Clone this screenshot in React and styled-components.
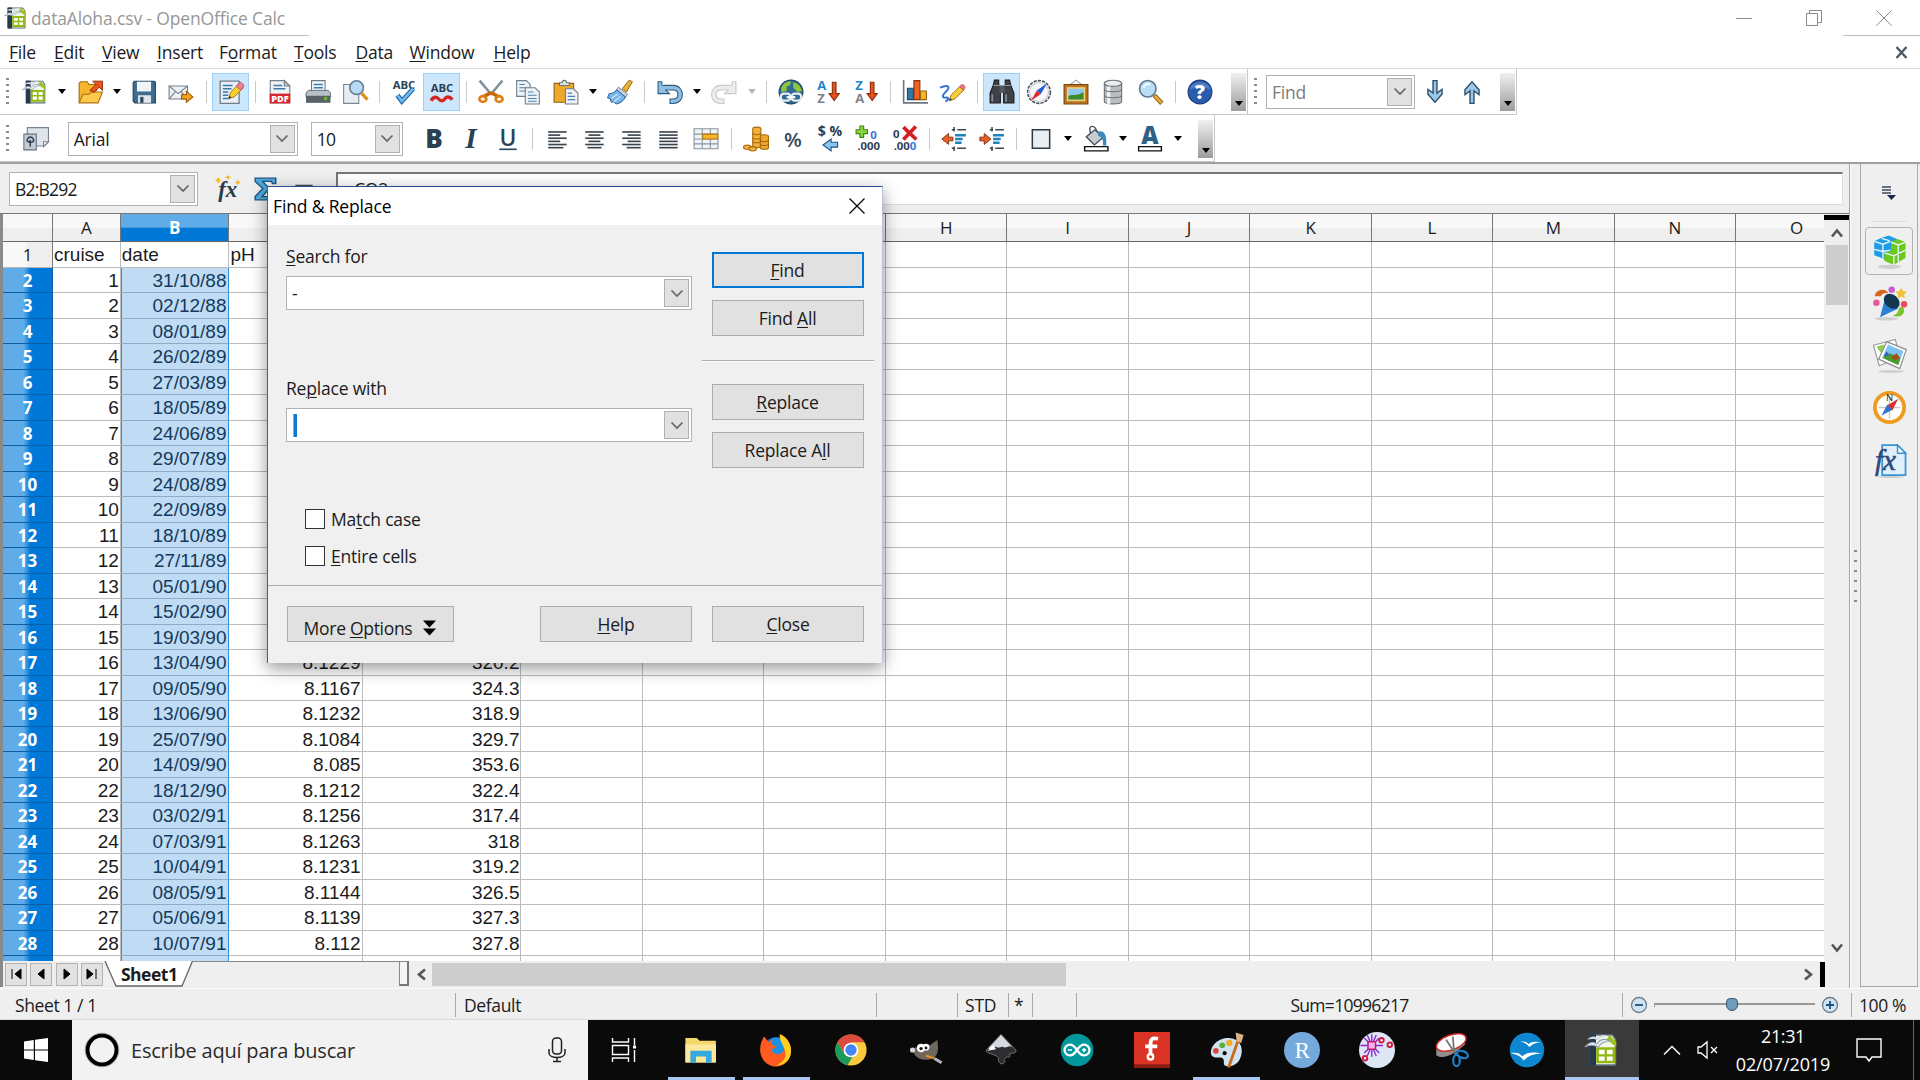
import React from 'react';
import styled, { createGlobalStyle, css } from 'styled-components';

const GlobalStyle = createGlobalStyle`
  * {
    box-sizing: border-box;
  }

  body {
    margin: 0;
    background: #fff;
    font-family: 'Open Sans', 'Noto Sans', sans-serif;
    font-size: 17.5px;
    letter-spacing: -0.2px;
    color: #1b1b1b;
  }

  svg {
    overflow: visible;
  }
`;

/* ---------- text ---------- */

const Label = styled.span`
  white-space: nowrap;
  line-height: 24px;
  font-size: ${p => p.$size || 17.5}px;
  letter-spacing: ${p => (p.$track === undefined ? -0.2 : p.$track)}px;
  color: ${p => p.$color || 'inherit'};

  u {
    text-decoration-thickness: 1px;
    text-underline-offset: 2px;
  }
`;

// "_" marks the letter that is the keyboard mnemonic
const Mnemonic = ({ text, ...rest }) => {
  const at = text.indexOf('_');
  if (at < 0) return <Label {...rest}>{text}</Label>;
  return (
    <Label {...rest}>
      {text.slice(0, at)}
      <u>{text[at + 1]}</u>
      {text.slice(at + 2)}
    </Label>
  );
};

/* ---------- icons ---------- */

const Svg = ({ size = 26, children, box = 24 }) => (
  <svg width={size} height={size} viewBox={`0 0 ${box} ${box}`} fill="none">
    {children}
  </svg>
);

const AbcText = ({ y }) => (
  <text x="12" y={y} textAnchor="middle" fontFamily="Open Sans" fontWeight="700" fontSize="10.5" letterSpacing="0" fill="#2b3f52">
    ABC
  </text>
);

const DownArrowRed = () => (
  <path d="M16 3h3.400v10.500h3l-4.700 6.500-4.700-6.500h3z" fill="#e8501c" stroke="#8a2c0c" />
);

const SortText = ({ top, bottom }) => (
  <g fontFamily="Open Sans" fontWeight="700" fontSize="12" letterSpacing="0">
    <text x="2" y="10" fill="#1d86cc">{top}</text>
    <text x="2" y="22.500" fill="#7d8388">{bottom}</text>
  </g>
);

const AlignLines = ({ rows }) => (
  <g stroke="#39434c" strokeWidth="1.500">
    {rows.map(([a, b], i) => (
      <path key={i} d={`M${a} ${5.500 + i * 2.900}H${b}`} />
    ))}
  </g>
);

const CalcGlyph = () => (
  <>
    <path d="M4 2h15l2 3v17H4z" fill="#f3f7e6" stroke="#5d7180" />
    <path d="M3.500 1.500h4.500v21H3.500z" fill="#26394e" />
    <path d="M17 2l4.500 4.500V10L15 5z" fill="#9cc31a" />
    <path d="M9 11h11v9H9z" fill="#fff" stroke="#93b812" strokeWidth="1.800" />
    <path d="M14.500 11v9M9 15.500h11" stroke="#93b812" strokeWidth="1.500" />
    <path d="M.5 10c3-3.500 6-4 8-2 2-3 5-4 9-2-4 0-6 1-8 4-3-1.500-6-1.500-9 0z" fill="#e9edf1" stroke="#8e9dab" strokeWidth=".7" />
    <path d="M2 5c3-2.500 5-2.500 7-1 2-2 4-2.500 6.500-1.500-3 .5-4.500 1.200-6 3C7 4.500 5 4.300 2 5z" fill="#d5dce2" />
  </>
);

const Indents = ({ arrow }) => (
  <>
    <path d="M10 3.500h3M15 3.500h8M10 20.500h3M15 20.500h8M12 1v4M12 19v4" stroke="#3c4750" strokeWidth="1.400" />
    <path d="M13 8.500h10M13 12h7M13 15.500h6" stroke="#1e82bd" strokeWidth="2.300" />
    <path d={arrow} fill="#e5602a" stroke="#8c300e" strokeWidth=".9" />
  </>
);

const icons = {
  calc: <CalcGlyph />,
  open: (
    <>
      <path d="M2 22V4l1.500-1.500h6L11 5h7v6" fill="#f5b52c" stroke="#a8680c" />
      <path d="M2 22L5.500 14h6l1.500-2h10.500L19.500 22z" fill="#fdc94a" stroke="#b26f0c" />
      <path d="M12 10.500l5.500-5.500-3-3h9v8.500l-3-3-5 5z" fill="#ea5320" stroke="#8f2c0b" strokeWidth=".9" />
    </>
  ),
  save: (
    <>
      <path d="M2 3.500L3 2h18.500L22.500 3v19H3.500L2 20.500z" fill="#3f6d92" stroke="#233f5a" />
      <path d="M5.500 2.500h13v9h-13z" fill="#f1f4f6" />
      <path d="M6.500 15h12v7h-12z" fill="#dfe5ea" />
      <path d="M8.500 16.500h3V22h-3z" fill="#2c4a66" />
    </>
  ),
  mail: (
    <>
      <path d="M1 6.500h17v12H1z" fill="#eef1f4" stroke="#75818c" />
      <path d="M1 6.500l8.500 7L18 6.500M1 18.500l6-7M18 18.500l-6-7" stroke="#75818c" />
      <path d="M12.500 14.500H17V11.500l6 5-6 5V18.500h-4.500z" fill="#f6a31b" stroke="#9a5a06" />
    </>
  ),
  edit: (
    <>
      <path d="M2 2h17.500v20.500H2z" fill="#e9eff4" stroke="#6d7c89" strokeWidth="1.200" />
      <path d="M4.500 6h9M4.500 9h8M4.500 12h5M4.500 15h5M4.500 18h6" stroke="#3b79a8" strokeWidth="1.300" />
      <path d="M10 18l1.500-5.500L19 4.500l4 4-8 8z" fill="#f9cf2f" stroke="#9a6a08" strokeWidth=".8" />
      <path d="M17 6.500l2.500-3c1.500-1.500 5.500 2 4 4l-2.500 3z" fill="#ef7f93" stroke="#b34a5b" strokeWidth=".8" />
      <path d="M10 18l.6-2.500 1.800 1.800z" fill="#222" />
    </>
  ),
  pdf: (
    <>
      <path d="M3 1.500h13l5 5V22H3z" fill="#eef2f5" stroke="#74828e" />
      <path d="M16 1.500v5h5z" fill="#c2cbd3" stroke="#74828e" />
      <path d="M6 6h8M6 9h11" stroke="#3b79a8" strokeWidth="1.300" />
      <path d="M2.500 13.500h19v9h-19z" fill="#d9232e" />
      <text x="12" y="21" textAnchor="middle" fontFamily="Open Sans" fontWeight="800" fontSize="8.500" letterSpacing="0" fill="#fff">PDF</text>
    </>
  ),
  print: (
    <>
      <path d="M6 12V1.500h12.500V12" fill="#f4f7f9" stroke="#6c7985" />
      <path d="M8 5h8.500M8 8h8.500" stroke="#3b79a8" strokeWidth="1.400" />
      <path d="M1 13l2-2.500h18.500l2 2.500v4H1z" fill="#b8bfc5" stroke="#555f68" strokeWidth=".8" />
      <path d="M1 15.500h22.500V22H1z" fill="#5a6268" />
      <path d="M17.500 16.500h3v3h-3z" fill="#64b827" />
    </>
  ),
  preview: (
    <>
      <path d="M1.500 5h14v17.500h-14z" fill="#e9edf1" stroke="#7c8893" />
      <circle cx="13.500" cy="8" r="6.300" fill="#b6daf2" stroke="#5e7c94" strokeWidth="1.400" />
      <path d="M18 13l5.500 6" stroke="#d8931c" strokeWidth="3" />
    </>
  ),
  spell: (
    <>
      <AbcText y="9" />
      <path d="M6 15l4 5.500L20.500 9" stroke="#1c5e9b" strokeWidth="4.400" />
      <path d="M6 15l4 5.500L20.500 9" stroke="#6cbcf2" strokeWidth="2.400" />
    </>
  ),
  autospell: (
    <>
      <AbcText y="12" />
      <path d="M2 20c2-4 5-4 7-1.500s4 2 5.500 0 4-3 7 .5" stroke="#d92424" strokeWidth="3.200" />
    </>
  ),
  cut: (
    <>
      <path d="M1.500 1.500l11 13M22.500 1.500l-11 13" stroke="#848e96" strokeWidth="2.300" />
      <path d="M12 12.500l-7 4M12 12.500l7 4" stroke="#c86508" strokeWidth="3.200" />
      <ellipse cx="4.500" cy="18.500" rx="3.200" ry="2.700" stroke="#e07d10" strokeWidth="2.400" />
      <ellipse cx="19.500" cy="18.500" rx="3.200" ry="2.700" stroke="#e07d10" strokeWidth="2.400" />
    </>
  ),
  copy: (
    <>
      <path d="M1.500 1.500h9l3.500 3.500v11h-12.500z" fill="#eef2f5" stroke="#6f7f8c" />
      <path d="M4 5h5M4 8h7M4 11h7" stroke="#4a84b0" />
      <path d="M9.500 8h9l4 4v11h-13z" fill="#eef2f5" stroke="#6f7f8c" />
      <path d="M12 12h5M12 15h8M12 18h8M12 20.500h8" stroke="#4a84b0" />
    </>
  ),
  paste: (
    <>
      <path d="M1 4h18v17.500H1z" fill="#eda92b" stroke="#92600e" />
      <path d="M6 6V3.500h2.500c0-3 4-3 4 0H15V6z" fill="#e4e7ea" stroke="#6d737a" />
      <path d="M11.500 9h7.500l4 4v10H11.500z" fill="#eef2f5" stroke="#6f7f8c" />
      <path d="M13.500 13h4M13.500 16h7M13.500 19h7" stroke="#4a84b0" />
    </>
  ),
  brush: (
    <>
      <path d="M14 9l6.500-8 3 1.500L18 12z" fill="#e6b034" stroke="#8b6110" strokeWidth=".8" />
      <path d="M10.500 7.500L19 14l-2 3-8.500-6.500z" fill="#c8d3dc" stroke="#5f7080" strokeWidth=".7" />
      <path d="M9 10l8 6.500c-1.500 3.500-4.500 6-8.500 6.500L6 21l-2 .5L3 18l-2.500-.5 1.500-4C5 13.500 7 12 9 10z" fill="#79b4ea" stroke="#235a9c" strokeWidth=".9" />
      <path d="M4 18l6-4M6.500 21l6-5" stroke="#d7ebfb" />
    </>
  ),
  undo: (
    <>
      <path d="M6 8h9c8.500 0 8.500 12.500 0 12.500h-3.500" stroke="#2b5a80" strokeWidth="5.200" />
      <path d="M1 2.500v11h10.500L7.500 9.500l1-2-4-2V2.500z" fill="#8fc0e4" stroke="#2b5a80" />
      <path d="M6 8h9c8.500 0 8.500 12.500 0 12.500h-2.500" stroke="#8fc0e4" strokeWidth="3.200" />
    </>
  ),
  redo: (
    <>
      <path d="M18 8H9c-8.500 0-8.500 12.500 0 12.500h3.500" stroke="#c9c9c9" strokeWidth="5.200" />
      <path d="M23 2.500v11H12.500l4-4-1-2 4-2V2.500z" fill="#ececec" stroke="#c9c9c9" />
      <path d="M18 8H9c-8.500 0-8.500 12.500 0 12.500h2.500" stroke="#ececec" strokeWidth="3.200" />
    </>
  ),
  link: (
    <>
      <circle cx="12" cy="12" r="11" fill="#2e6a94" stroke="#1e4461" />
      <path d="M3 8c2-5 6-6 9-6l-1 4-3 1v4l-5 1zM14 3c5 1 7 4 8 8l-4 1-4-4z" fill="#8dc63a" />
      <rect x="2.500" y="13.500" width="9" height="6.500" rx="3" stroke="#e8ecef" strokeWidth="2.200" />
      <rect x="12.500" y="13.500" width="9" height="6.500" rx="3" stroke="#e8ecef" strokeWidth="2.200" />
      <path d="M8 16.800h8" stroke="#fff" strokeWidth="2" />
    </>
  ),
  sortAsc: (
    <>
      <SortText top="A" bottom="Z" />
      <DownArrowRed />
    </>
  ),
  sortDesc: (
    <>
      <SortText top="Z" bottom="A" />
      <DownArrowRed />
    </>
  ),
  chart: (
    <>
      <path d="M1.500 1v21H24" stroke="#6a7681" strokeWidth="1.500" />
      <path d="M5 8.500h5.500V19H5z" fill="#3277a6" stroke="#1c4664" />
      <path d="M11 1.500h5.500V19H11z" fill="#ee6320" stroke="#8c300a" />
      <path d="M17 11h5.500v8H17z" fill="#f7b42c" stroke="#97650d" />
    </>
  ),
  draw: (
    <>
      <path d="M1 8c7-3 10-1 6 3s-5 7 0 6c2 0 2 2-1 4" stroke="#2f6fd0" strokeWidth="1.800" />
      <path d="M9.500 20l1.500-5 8-8 3.500 3.500-8 8z" fill="#f7cf3c" stroke="#8b690f" strokeWidth=".8" />
      <path d="M19 7l1.500-1.500c2-1 4.500 1.500 3 3.500l-1 1.500z" fill="#ee7a90" stroke="#aa4358" strokeWidth=".7" />
      <path d="M9.500 20l.7-2.500 1.700 1.700z" fill="#222" />
    </>
  ),
  find: (
    <>
      <path d="M5 1h4v4l1.500 5v12H1V13L4 5.500z" fill="#3e4246" stroke="#1c1e20" />
      <path d="M19 1h-4v4l-1.500 5v12H23V13l-3-7.500z" fill="#3e4246" stroke="#1c1e20" />
      <path d="M9.500 6h5v7h-5z" fill="#54595e" />
      <path d="M3 14v7M15.800 14v7" stroke="#8b9197" strokeWidth="1.500" />
      <path d="M4 6h6M14 6h6" stroke="#9ca2a7" strokeWidth=".8" />
    </>
  ),
  compass: (
    <>
      <circle cx="12" cy="12" r="10.500" fill="#f6f7f8" stroke="#4a5158" strokeWidth="1.400" strokeDasharray="3 1" />
      <circle cx="12" cy="12" r="8.800" stroke="#c6cbd0" />
      <path d="M19.500 4L13.500 14l-3.500-3.500z" fill="#1d5cd8" />
      <path d="M4.500 20L10 10.500l3.500 3.500z" fill="#e4282c" />
    </>
  ),
  gallery: (
    <>
      <path d="M7 5l5-4 5 4" stroke="#9aa2a8" />
      <path d="M1 5h22v18H1z" fill="#b8731c" stroke="#76450c" />
      <path d="M3.500 7.500h17v13h-17z" fill="#f3cf7a" />
      <path d="M5 9h14v10H5z" fill="#8cc9f2" />
      <path d="M5 16c3-3 6 1 14-4v7H5z" fill="#3e8b2a" />
    </>
  ),
  database: (
    <>
      <path d="M4 4v16.500c0 3.300 16 3.300 16 0V4z" fill="#b9bec3" stroke="#6c7378" />
      <path d="M8 6v17" stroke="#f0f2f4" strokeWidth="3" />
      <ellipse cx="12" cy="4" rx="8" ry="2.800" fill="#e9ebed" stroke="#6c7378" />
      <path d="M4 9.500c0 3 16 3 16 0M4 15c0 3 16 3 16 0" stroke="#6c7378" />
    </>
  ),
  zoom: (
    <>
      <circle cx="9" cy="9" r="7.600" fill="#b9def6" stroke="#60798e" strokeWidth="1.500" />
      <path d="M5 8c1-3 4-4 6-3" stroke="#fff" strokeWidth="1.800" />
      <path d="M15 15l7 7.500" stroke="#8e5f10" strokeWidth="4.200" />
      <path d="M15.500 15.500l6 6.500" stroke="#e8ae3b" strokeWidth="2.400" />
    </>
  ),
  help: (
    <>
      <circle cx="12" cy="12" r="11" fill="#2a5cad" stroke="#173c7c" />
      <path d="M2.500 10c1-9 18-9 19 0-6-3-13-3-19 0z" fill="#6b94d4" opacity=".6" />
      <text x="12" y="18.500" textAnchor="middle" fontFamily="Open Sans" fontWeight="800" fontSize="18" letterSpacing="0" fill="#fff">?</text>
    </>
  ),
  findDown: <path d="M10.200 1.500h3.600v11.500l4.700-3.500v4.500L12 21.500 5.500 14V9.500l4.700 3.500z" fill="#9cc8e8" stroke="#2b506e" strokeWidth="1.300" />,
  findUp: <path d="M10.200 22.500h3.600V11l4.700 3.500V10L12 2.500 5.500 10v4.500l4.700-3.500z" fill="#9cc8e8" stroke="#2b506e" strokeWidth="1.300" />,
  styles: (
    <>
      <path d="M4 1.500h19.500v13l-4 4H4z" fill="#dfe5ea" stroke="#76838f" />
      <path d="M23.500 14.500h-4.500v4.500z" fill="#fff" stroke="#76838f" />
      <path d="M.8 7.500h11.500v14.500H.8z" fill="#c3ccd5" stroke="#66737f" />
      <path d="M4 12c1.500-2.500 4-2.500 5.500 0s-1.500 3-2.800 3S3 14.500 4 12zM6.700 13v6" stroke="#2c3a47" strokeWidth="1.300" />
    </>
  ),
  bold: <text x="12" y="20" textAnchor="middle" fontFamily="Open Sans" fontWeight="800" fontSize="24" letterSpacing="0" fill="#2b3f52">B</text>,
  italic: <text x="12" y="20" textAnchor="middle" fontFamily="Liberation Serif" fontStyle="italic" fontWeight="700" fontSize="27" letterSpacing="0" fill="#2b3f52">I</text>,
  underline: (
    <>
      <text x="12" y="18" textAnchor="middle" fontFamily="Open Sans" fontWeight="600" fontSize="21" letterSpacing="0" fill="#2b4258">U</text>
      <path d="M4 21.500h16" stroke="#2b4258" strokeWidth="1.500" />
    </>
  ),
  left: <AlignLines rows={[[3, 20], [3, 14], [3, 20], [3, 14], [3, 20], [3, 17]]} />,
  center: <AlignLines rows={[[3, 20], [6, 17], [3, 20], [6, 17], [3, 20], [5, 18]]} />,
  right: <AlignLines rows={[[3, 20], [8, 20], [3, 20], [8, 20], [3, 20], [7, 20]]} />,
  justify: <AlignLines rows={[[3, 20], [3, 20], [3, 20], [3, 20], [3, 20], [3, 20]]} />,
  merge: (
    <>
      <path d="M1 2.500h22v18.500H1z" fill="#f1f4f7" stroke="#8794a0" />
      <path d="M1 7.500h22M1 12h22M1 16.500h22M8.500 2.500v18.500M16 2.500v18.500" stroke="#8794a0" />
      <path d="M9 7.500h14V12H9z" fill="#f8b52a" stroke="#b57a10" />
    </>
  ),
  currency: (
    <>
      <path d="M9 2.500v16c0 2 7.500 2 7.500 0v-16c0-2-7.500-2-7.500 0z" fill="#f3b038" stroke="#a5680c" />
      <path d="M16 9.500V20c0 2 7.500 2 7.500 0V9.500c0-2-7.500-2-7.500 0z" fill="#f0a728" stroke="#a5680c" />
      <path d="M9 6.500c0 2 7.500 2 7.500 0M9 10.500c0 2 7.500 2 7.500 0M9 14c0 2 7.500 2 7.500 0M16 13c0 2 7.500 2 7.500 0M16 16.500c0 2 7.500 2 7.500 0" stroke="#a5680c" />
      <ellipse cx="4" cy="19.500" rx="3.500" ry="2" fill="#f3b038" stroke="#a5680c" />
      <ellipse cx="9" cy="21" rx="3.500" ry="2" fill="#f3b038" stroke="#a5680c" />
    </>
  ),
  percent: <text x="12" y="19" textAnchor="middle" fontFamily="Open Sans" fontWeight="600" fontSize="19" letterSpacing="0" fill="#33495e">%</text>,
  standard: (
    <>
      <text x="12" y="9.500" textAnchor="middle" fontFamily="Open Sans" fontWeight="700" fontSize="13" letterSpacing="0" fill="#2d4052">$ %</text>
      <path d="M19 15h-6V12L5.500 17.500l7.500 5.500v-3.500h6z" fill="#8ac5ee" stroke="#1d5485" />
    </>
  ),
  addDecimal: (
    <>
      <path d="M4.500 0h3.500v3.500h3.500V7H8v3.500H4.500V7H1V3.500h3.500z" fill="#8dd63e" stroke="#3b8712" />
      <g fontFamily="Open Sans" fontWeight="700" letterSpacing="0">
        <text x="14" y="12" fontSize="10.500" fill="#3b71e0">0</text>
        <text x="12.500" y="22.500" textAnchor="middle" fontSize="10.500" fill="#2f4254">.000</text>
      </g>
    </>
  ),
  delDecimal: (
    <>
      <g fontFamily="Open Sans" fontWeight="700" letterSpacing="0">
        <text x="1" y="11" fontSize="10.500" fill="#2f4254">0</text>
        <text x="1.500" y="22.500" fontSize="10.500" fill="#2f4254">.00<tspan fill="#3b71e0">0</tspan></text>
      </g>
      <path d="M10.500 1l12 11.500M22 .500L10.500 12.500" stroke="#d51f28" strokeWidth="3.400" />
    </>
  ),
  outdent: <Indents arrow="M11 10.300H7V7L.8 12 7 17v-3.300h4z" />,
  indent: <Indents arrow="M.8 10.300h4V7l6.200 5-6.200 5v-3.300h-4z" />,
  border: <path d="M4 3.500h16v17H4z" fill="#e9eef3" stroke="#2e3b47" strokeWidth="1.400" />,
  fill: (
    <>
      <path d="M3 10l8-6.500 7.500 7-8 7z" fill="#c6ccd1" stroke="#3e4b57" strokeWidth="1.200" />
      <path d="M7 6.500c-3-8 4-8 6-1" stroke="#3e4b57" strokeWidth="1.300" />
      <path d="M14 5c6-1 8 3 7.500 13h-3c0-5 0-7-4.500-9z" fill="#3c87bb" />
      <path d="M1.500 19h21.500v4H1.500z" fill="#fff" stroke="#111" strokeWidth="1.300" />
    </>
  ),
  fontColor: (
    <>
      <text x="12" y="16.500" textAnchor="middle" fontFamily="Open Sans" fontWeight="800" fontSize="22" letterSpacing="0" fill="#2f6187">A</text>
      <path d="M1.500 19h21v4h-21z" fill="#fff" stroke="#111" strokeWidth="1.300" />
    </>
  )
};

/* ---------- window frame ---------- */

const Desktop = styled.div`
  position: relative;
  display: flex;
  flex-direction: column;
  width: 1920px;
  height: 1080px;
  overflow: hidden;
  background: #fff;
`;

const TitleBar = styled.header`
  display: flex;
  align-items: center;
  height: 35px;
  padding: 0 28px 0 4px;
  gap: 3px;
`;

const WindowControls = styled.div`
  display: flex;
  align-items: center;
  gap: 54px;
  margin-left: auto;
`;

const EdgeLine = styled.div`
  display: flex;
  justify-content: space-between;
  height: 1px;

  &::before,
  &::after {
    content: '';
    width: 309px;
    background: #bdbdbd;
  }

  &::after {
    width: 77px;
  }
`;

const MenuBar = styled.nav`
  display: flex;
  align-items: center;
  height: 33px;
  padding: 0 12px 0 9px;
  border-bottom: 1px solid #dcdcdc;
`;

const MenuItem = styled.div`
  flex: none;
  width: ${p => p.$width}px;
`;

const CloseDocument = styled.div`
  margin-left: auto;
  display: flex;
`;

/* ---------- toolbars ---------- */

const ToolbarRow = styled.div`
  display: flex;
  height: ${p => p.$height}px;
`;

const Toolbar = styled.div`
  display: flex;
  align-items: center;
  width: ${p => p.$width}px;
  padding: ${p => p.$top || 0}px 1px 0 0;
  border-right: 1px solid #c8c8c8;
  border-bottom: 1px solid #c8c8c8;
`;

const Grip = styled.div`
  flex: none;
  width: 3px;
  height: 28px;
  margin: 0 ${p => p.$after}px 0 6px;
  background: repeating-linear-gradient(#8b8b8b 0 2px, transparent 2px 6px);
`;

const ToolButton = styled.div`
  flex: none;
  display: flex;
  align-items: center;
  justify-content: center;
  width: 37.2px;
  height: 38px;
  margin-right: ${p => p.$after || 0}px;
  ${p =>
    p.$active &&
    css`
      background: #cce6fc;
      border: 1px solid #9bd0fb;
    `}
`;

const DropArrow = styled.div`
  flex: none;
  width: 17.4px;
  display: flex;
  justify-content: center;

  &::after {
    content: '';
    border: 4px solid transparent;
    border-top: 5px solid ${p => (p.$disabled ? '#b5b5b5' : '#000')};
    border-bottom: 0;
  }
`;

const Divider = styled.div`
  flex: none;
  width: 1px;
  height: 22px;
  margin: 0 5.7px;
  background: #c9c9c9;
`;

const Overflow = styled.div`
  display: flex;
  align-items: flex-end;
  justify-content: center;
  width: 15px;
  height: 38px;
  margin-left: auto;
  padding-bottom: 5px;
  background: linear-gradient(#f0f0f0, #9c9c9c);

  &::after {
    content: '';
    border: 4px solid transparent;
    border-top: 5px solid #000;
    border-bottom: 0;
  }
`;

const Combo = styled.div`
  flex: none;
  display: flex;
  align-items: center;
  justify-content: space-between;
  width: ${p => p.$width}px;
  height: 34px;
  padding: 2px 2px 2px 5px;
  margin-right: ${p => p.$after || 0}px;
  background: #fff;
  border: 1px solid #b2b2b6;
`;

const ComboArrow = styled.div`
  display: flex;
  align-items: center;
  justify-content: center;
  width: 25px;
  height: 28px;
  background: #e1e1e1;
  border: 1px solid #b1b1b1;
`;

const Chevron = () => (
  <ComboArrow>
    <svg width="14" height="9" viewBox="0 0 14 9" fill="none">
      <path d="M1.500 1.500L7 7l5.500-5.500" stroke="#666" strokeWidth="1.700" />
    </svg>
  </ComboArrow>
);

const Tools = ({ items }) =>
  items.map((item, i) => {
    if (item === '|') return <Divider key={i} />;
    if (item === 'v') return <DropArrow key={i} />;
    if (item === 'x') return <DropArrow key={i} $disabled />;
    const active = item[0] === '*';
    return (
      <ToolButton key={i} $active={active}>
        <Svg>{icons[active ? item.slice(1) : item]}</Svg>
      </ToolButton>
    );
  });

const standardTools = [
  'calc', 'v', 'open', 'v', 'save', 'mail', '|', '*edit', '|', 'pdf', 'print', 'preview', '|',
  'spell', '*autospell', '|', 'cut', 'copy', 'paste', 'v', 'brush', '|', 'undo', 'v', 'redo', 'x', '|',
  'link', 'sortAsc', 'sortDesc', '|', 'chart', 'draw', '|', '*find', 'compass', 'gallery', 'database',
  'zoom', '|', 'help'
];

const formatTools = [
  'bold', 'italic', 'underline', '|', 'left', 'center', 'right', 'justify', 'merge', '|', 'currency',
  'percent', 'standard', 'addDecimal', 'delDecimal', '|', 'outdent', 'indent', '|', 'border', 'v',
  'fill', 'v', 'fontColor', 'v'
];

/* ---------- workspace ---------- */

const Workspace = styled.main`
  display: flex;
  height: 826px;
  border-top: 2px solid #a0a0a0;
  background: #efefef;
`;

const SheetArea = styled.section`
  width: 1850px;
  border-right: 1px solid #a5a5a5;
`;

const FormulaBar = styled.div`
  display: flex;
  align-items: center;
  height: 50px;
  padding: 0 6px 0 9px;
  border-bottom: 1px solid #777;
`;

const FormulaIcons = styled.div`
  display: flex;
  align-items: center;
  gap: 12px;
  width: 121px;
`;

const FormulaInput = styled.div`
  display: flex;
  align-items: center;
  flex: 1;
  height: 33px;
  padding-left: 16px;
  background: #fff;
  border: 2px solid #767676;
  border-right: 1px solid #ddd;
  border-bottom: 1px solid #ddd;
`;

const SheetBody = styled.div`
  display: flex;
  height: 747px;
`;

const Grid = styled.div`
  width: 1824px;
  height: 747px;
  overflow: hidden;
  background: #fff;
  border-left: 3px solid #8a8a8a;
`;

const Row = styled.div`
  display: flex;
  height: ${p => (p.$head ? 28 : 25.52)}px;
`;

const HeadCell = styled.div`
  flex: none;
  width: ${p => p.$width}px;
  border-right: 1px solid #777;
  border-bottom: 1px solid #666;
  background: linear-gradient(#f8f8f8 50%, #efefef 50%);
  text-align: center;
  font-size: 17px;
  line-height: 28px;
  ${p =>
    p.$selected &&
    css`
      color: #fff;
      font-weight: 700;
      background: linear-gradient(#60ace8 48%, #0078d7 54%);
    `}
`;

const RowHead = styled.div`
  flex: none;
  width: 50px;
  border-right: 1px solid #777;
  border-bottom: 1px solid #b5b5b5;
  background: linear-gradient(to right, #f8f8f8 50%, #efefef 50%);
  text-align: center;
  font-size: 17px;
  letter-spacing: 0;
  line-height: 26px;
  ${p =>
    p.$selected &&
    css`
      color: #fff;
      font-weight: 700;
      border-color: #0d5ea3;
      background: linear-gradient(to right, #60ace8 42%, #0078d7 56%);
    `}
`;

const Cell = styled.div`
  flex: none;
  width: ${p => p.$width}px;
  padding: 0 1px;
  border-right: 1px solid #bcbcbc;
  border-bottom: 1px solid #bcbcbc;
  font-family: 'Liberation Sans', Arial, sans-serif;
  font-size: 19px;
  letter-spacing: 0;
  line-height: 25px;
  text-align: ${p => (p.$text ? 'left' : 'right')};
  ${p =>
    p.$selected &&
    css`
      padding-right: 2px;
      color: #14395c;
      background: #bfdcf4;
      border-right-color: #2f8fdc;
      border-bottom-color: #8fabc3;
      box-shadow: inset 1px 0 #2f8fdc;
    `}
`;

const VerticalScroll = styled.div`
  display: flex;
  flex-direction: column;
  align-items: center;
  width: 25px;
  background: #efefef;
  border-top: 5px solid #000;
  margin-top: 1px;
`;

const ScrollArrow = styled.div`
  display: flex;
  align-items: center;
  justify-content: center;
  width: 22px;
  height: 25px;
  transform: rotate(${p => p.$turn || 0}deg);
`;

const VerticalThumb = styled.div`
  width: 22px;
  height: 60px;
  margin-bottom: auto;
  background: #cdcdcd;
`;

const ScrollGlyph = ({ turn }) => (
  <ScrollArrow $turn={turn}>
    <svg width="14" height="10" viewBox="0 0 14 10" fill="none">
      <path d="M2 8.500l5-6 5 6" stroke="#555" strokeWidth="2.600" />
    </svg>
  </ScrollArrow>
);

const TabBar = styled.div`
  display: flex;
  align-items: center;
  height: 26px;
  padding-left: 2px;
  border-left: 3px solid #8a8a8a;
`;

const NavButton = styled.div`
  display: flex;
  align-items: center;
  justify-content: center;
  width: 22px;
  height: 23px;
  margin-right: 3.3px;
  background: #e1e1e1;
  border: 1px solid #b4b4b4;
`;

const SheetTab = styled.div`
  position: relative;
  display: flex;
  align-items: center;
  justify-content: center;
  width: 88px;
  height: 26px;
  margin-left: -1px;
  font-weight: 700;

  svg {
    position: absolute;
    inset: 0;
  }

  span {
    position: relative;
  }
`;

const TabSpace = styled.div`
  width: 206px;
  height: 26px;
  border-top: 1px solid #888;
`;

const Splitter = styled.div`
  width: 10px;
  height: 25px;
  margin: 0 1px 1px 0;
  background: #f5f5f5;
  border: 1px solid #8a8a8a;
  border-right: 2px solid #777;
  border-bottom: 2px solid #777;
`;

const HorizontalScroll = styled.div`
  display: flex;
  align-items: center;
  width: 1415px;
  height: 25px;
  border-right: 5px solid #000;
`;

const HorizontalThumb = styled.div`
  width: 634px;
  height: 23px;
  margin-right: auto;
  background: #cdcdcd;
`;

const SidebarGrip = styled.div`
  display: flex;
  align-items: center;
  justify-content: center;
  width: 10px;
  border-left: 1px solid #fff;

  &::after {
    content: '';
    width: 3px;
    height: 52px;
    background: repeating-linear-gradient(#8b8b8b 0 2px, transparent 2px 10px);
  }
`;

const Sidebar = styled.aside`
  display: flex;
  flex-direction: column;
  align-items: center;
  width: 58px;
  height: 823px;
  border: 1px solid #aaa;
  border-top: 0;
`;

const SidebarMenu = styled.div`
  display: flex;
  align-items: center;
  justify-content: center;
  width: 34px;
  height: 58px;
  border-bottom: 1px solid #dcdcdc;
  margin-bottom: 5px;
`;

const SidebarTab = styled.div`
  display: flex;
  align-items: center;
  justify-content: center;
  width: 48px;
  height: 48px;
  margin-bottom: 4.3px;
  border: 1px solid ${p => (p.$active ? '#b3b3b3' : 'transparent')};
  border-radius: 4px;
`;

/* ---------- status bar ---------- */

const StatusBar = styled.footer`
  display: flex;
  align-items: center;
  height: 32px;
  padding-top: 2px;
  background: #efefef;
  border-top: 1px solid #fafafa;
  border-bottom: 1px solid #d8d8d8;
`;

const StatusField = styled.div`
  flex: none;
  display: flex;
  align-items: center;
  justify-content: ${p => (p.$center ? 'center' : 'flex-start')};
  width: ${p => p.$width}px;
  height: 24px;
  padding-left: ${p => (p.$pad === undefined ? 8 : p.$pad)}px;
  border-left: ${p => (p.$first ? '0' : '1px solid #a9a9a9')};
`;

const ZoomTrack = styled.div`
  position: relative;
  width: 161px;
  height: 4px;
  margin: 0 6px;
  border-top: 2px solid #979797;
  border-left: 1px solid #979797;
`;

const ZoomKnob = styled.div`
  position: absolute;
  left: 71px;
  top: -7px;
  width: 12px;
  height: 13px;
  border: 1px solid #33566f;
  border-radius: 5px 5px 7px 7px;
  background: #6d9cbd;
`;

/* ---------- dialog ---------- */

const Dialog = styled.div`
  position: absolute;
  left: 267px;
  top: 186px;
  width: 616px;
  height: 477px;
  background: #f0f0f0;
  border-top: 1px solid #2f4f95;
  border-left: 1px solid #3c5fa3;
  border-right: 1px solid #b9c3d6;
  box-shadow: 0 5px 16px rgba(0, 0, 0, 0.42);
`;

const DialogTitle = styled.div`
  display: flex;
  align-items: center;
  justify-content: space-between;
  height: 38px;
  padding: 0 17px 0 5px;
  background: #fff;
  color: #000;
`;

const DialogMain = styled.div`
  display: flex;
  height: 361px;
  border-bottom: 1px solid #aaa;
`;

const FieldColumn = styled.div`
  width: 433px;
  padding: 19px 0 0 18px;
`;

const Field = styled.div`
  height: ${p => p.$height}px;

  ${Combo} {
    margin-top: 8px;
  }
`;

const CheckRow = styled.div`
  display: flex;
  align-items: center;
  gap: 6px;
  height: 37.5px;
  padding-left: 19px;
`;

const CheckBox = styled.span`
  width: 20px;
  height: 20px;
  background: #fff;
  border: 1px solid #333;
`;

const Caret = styled.div`
  width: 4px;
  height: 23px;
  margin-left: 1px;
  border-left: 1px solid #d99a5c;
  background: #1379cf;
`;

const ButtonColumn = styled.div`
  display: flex;
  flex-direction: column;
  align-items: center;
  width: 174px;
  padding: 27px 1px 0 0;
`;

const Button = styled.div`
  flex: none;
  display: flex;
  align-items: center;
  justify-content: center;
  width: ${p => p.$width || 152}px;
  height: 36px;
  margin-bottom: ${p => p.$after || 0}px;
  background: #e1e1e1;
  border: ${p => (p.$primary ? '2px solid #0078d7' : '1px solid #adadad')};
`;

const ButtonRule = styled.div`
  width: 172px;
  height: 2px;
  margin: 12px 0 22px;
  background: #adadad;
  border-bottom: 1px solid #fff;
`;

const DialogFooter = styled.div`
  display: flex;
  align-items: center;
  height: 76px;
  padding: 0 18px 0 19px;
  gap: 20px;

  ${Button}:first-child {
    margin-right: auto;
    padding-top: 7px;
    gap: 10px;
  }
`;

/* ---------- taskbar ---------- */

const Taskbar = styled.footer`
  display: flex;
  height: 60px;
  background: #0a0a0a;
  color: #fff;
`;

const StartButton = styled.div`
  display: flex;
  align-items: center;
  justify-content: center;
  width: 72px;
`;

const SearchBox = styled.div`
  display: flex;
  align-items: center;
  width: 516px;
  padding: 0 21px 0 12px;
  background: #f2f2f2;
  color: #2b2b2b;

  span {
    margin: 2px auto 0 11px;
  }
`;

const TaskButton = styled.div`
  display: flex;
  align-items: center;
  justify-content: center;
  width: ${p => p.$width || 75.1}px;
  height: 60px;
  padding: 3px ${p => p.$pull || 0}px 0 0;
  background: ${p => (p.$active ? '#3a3a3a' : 'transparent')};
  border-bottom: 3px solid transparent;
  ${p =>
    p.$running &&
    css`
      border-image: linear-gradient(
          to right,
          transparent ${p.$active ? 0 : 7}px,
          #aac6f3 ${p.$active ? 0 : 7}px calc(100% - ${p.$active ? 0 : 7}px),
          transparent 0
        )
        3;
    `}
`;

const Tray = styled.div`
  display: flex;
  align-items: center;
  gap: 16px;
  margin-left: auto;
  width: 281px;
  padding-left: 24px;
`;

const Clock = styled.div`
  display: flex;
  flex-direction: column;
  align-items: center;
  width: 96px;
  margin-right: 9px;
  gap: 4px;
`;

const ShowDesktop = styled.div`
  width: 7px;
  height: 60px;
  margin-left: auto;
  border-left: 1px solid #666;
`;

/* ---------- data ---------- */

const columns = [
  ['A', 67.8], ['B', 108.7], ['C', 133.1], ['D', 158.9], ['E', 121.5], ['F', 121.5],
  ['G', 121.4], ['H', 121.5], ['I', 121.5], ['J', 121.4], ['K', 121.5], ['L', 121.4],
  ['M', 121.4], ['N', 121.5], ['O', 122]
];

const dates = [
  '31/10/88', '02/12/88', '08/01/89', '26/02/89', '27/03/89', '18/05/89', '24/06/89', '29/07/89',
  '24/08/89', '22/09/89', '18/10/89', '27/11/89', '05/01/90', '15/02/90', '19/03/90', '13/04/90',
  '09/05/90', '13/06/90', '25/07/90', '14/09/90', '18/12/90', '03/02/91', '07/03/91', '10/04/91',
  '08/05/91', '05/06/91', '10/07/91'
];

const measurements = {
  17: ['8.1229', '320.2'],
  18: ['8.1167', '324.3'],
  19: ['8.1232', '318.9'],
  20: ['8.1084', '329.7'],
  21: ['8.085', '353.6'],
  22: ['8.1212', '322.4'],
  23: ['8.1256', '317.4'],
  24: ['8.1263', '318'],
  25: ['8.1231', '319.2'],
  26: ['8.1144', '326.5'],
  27: ['8.1139', '327.3'],
  28: ['8.112', '327.8']
};

const rows = [
  { n: 1, values: ['cruise', 'date', 'pH', 'pCO2'] },
  ...dates.map((date, i) => {
    const n = i + 2;
    return { n, values: [n > 21 ? n : n - 1, date, ...(measurements[n] || [])] };
  }),
  { n: '', values: [] }
];

const menus = [
  ['_File', 45], ['_Edit', 48], ['_View', 55], ['_Insert', 62], ['F_ormat', 75], ['_Tools', 61.5],
  ['_Data', 54], ['_Window', 84], ['_Help', 60]
];

/* ---------- taskbar and sidebar drawings ---------- */

const Explorer = () => (
  <Svg size={34}>
    <path d="M1 3.500h8l2 2h11.500V21H1z" fill="#f6d66b" />
    <path d="M1 8h21.500v12.500H1z" fill="#fde79a" />
    <path d="M4.500 21v-8.500h15V21h-4v-4.500h-7V21z" fill="#36a9e0" />
  </Svg>
);

const Firefox = () => (
  <Svg size={36}>
    <circle cx="12" cy="12.500" r="9" fill="#2554c7" />
    <circle cx="12" cy="9.500" r="6" fill="#1793e6" />
    <path d="M2.500 6l1.500-3 3 3.500 3-1.500c-2 3 0 4 2.500 4.500-1 2-3 1.500-3.500 2 1 4 6 4.500 8 1 2-4-1.500-8-2.500-11C19 3 22.500 8 22 13.500 21.500 19 17 23 12 23S2 19 1.500 13c-.2-2.500.2-5 1-7z" fill="#ff5a20" />
    <path d="M14.500 1.500C19 3 22.500 8 22 13.500 21.500 19 17 22.500 12 22.500c6-3 7-6 6-10s-4-7-3.500-11z" fill="#ffcf1f" />
  </Svg>
);

const Chrome = () => (
  <Svg size={34}>
    <circle cx="12" cy="12" r="11" fill="#f9ca3e" />
    <path d="M12 1a11 11 0 0 1 9.500 5.500H12L7 14.500 2.500 6.500A11 11 0 0 1 12 1z" fill="#db4b3f" />
    <path d="M2.500 6.500l5 8.500 5.500 2-3.500 5.800A11 11 0 0 1 2.500 6.500z" fill="#1b9b58" />
    <circle cx="12" cy="12" r="5.200" fill="#fff" />
    <circle cx="12" cy="12" r="4" fill="#4385f4" />
  </Svg>
);

const Gimp = () => (
  <Svg size={34}>
    <path d="M4 10c3 1 8 0 10-1l6-4c1 7 1 12-5 13.500C9 20 4 17 3 13z" fill="#6e675d" />
    <circle cx="2.500" cy="12" r="1.800" fill="#d8d8d8" />
    <circle cx="8.500" cy="10.500" r="3" fill="#fff" />
    <circle cx="12" cy="10" r="2.400" fill="#fff" />
    <circle cx="8.500" cy="11" r="1.200" fill="#111" />
    <circle cx="12" cy="10.500" r="1" fill="#111" />
    <path d="M12 16l6 2" stroke="#e58a26" strokeWidth="1.600" />
    <path d="M18 18l5 3" stroke="#aeb4b8" strokeWidth="2.200" />
  </Svg>
);

const Inkscape = () => (
  <Svg size={34}>
    <path d="M12 1L22.500 12c1 2.500-3 2-5 3 1.500 1 1 2.500-1 2-1.500.5-3 1.500-1.500 3-2 3-4 2-5-1 1-2.500-1-2.500-3-3.500S1 14 1.500 12z" fill="#2d2d31" stroke="#8c8f94" strokeWidth=".5" />
    <path d="M12 1.200L20 10c-3-2-4 1-6 0s-3 1-5 0-4 2-6 1z" fill="#d5dae0" />
    <path d="M2.500 12.500l4-4 2 3z" fill="#fff" />
  </Svg>
);

const Arduino = () => (
  <Svg size={34}>
    <circle cx="12" cy="12" r="11.500" fill="#00979c" />
    <path d="M12 12c-2-3-3.500-3.800-5-3.800a3.800 3.800 0 0 0 0 7.600c1.500 0 3-.8 5-3.800s3.500-3.800 5-3.800a3.800 3.800 0 0 1 0 7.600c-1.500 0-3-.8-5-3.800z" stroke="#fff" strokeWidth="1.600" />
    <path d="M5.500 12h3M15.500 12h3M17 10.500v3" stroke="#fff" strokeWidth="1.100" />
  </Svg>
);

const Fritzing = () => (
  <Svg size={36}>
    <path d="M0 0h24v24H0z" fill="#da3324" />
    <path d="M0 21.500h24V24H0z" fill="#8a1d10" />
    <path d="M16 4.500c-4-1-5 .5-5 4V15M7.500 9.500h8" stroke="#fff" strokeWidth="2.500" />
    <circle cx="11" cy="16.500" r="1.800" stroke="#fff" strokeWidth="1.600" />
  </Svg>
);

const Paint = () => (
  <Svg size={38}>
    <path d="M2 15c-1-6 5-11 12-10.500S23 12 20 18c-2 4-7 5-9 4s0-4-2-5-5 1-7-2z" fill="#cfe3f0" />
    <circle cx="5" cy="12.500" r="1.800" fill="#d9463d" />
    <circle cx="9" cy="9" r="1.800" fill="#58ad3d" />
    <circle cx="13.500" cy="7.500" r="2" fill="#f5ac2b" />
    <circle cx="10.500" cy="14" r="1.300" fill="#0a0a0a" />
    <path d="M13 23l6-17" stroke="#c96d1a" strokeWidth="1.800" />
    <path d="M17.500 1l5 1.500-1.500 5-3-1z" fill="#d9b184" />
  </Svg>
);

const RLogo = () => (
  <Svg size={36}>
    <circle cx="12" cy="12" r="12" fill="#74a9dc" />
    <text x="12.200" y="17" textAnchor="middle" fontFamily="Liberation Serif" fontSize="15.500" letterSpacing="0" fill="#fff">R</text>
  </Svg>
);

const Cells = () => (
  <Svg size={36}>
    <circle cx="12" cy="12" r="12" fill="#dde6f5" />
    <path d="M8.500 1.500v15M1 9h15M3.500 4l10 10M13.500 4l-10 10M5.500 2l6 14M11.500 2l-6 14" stroke="#8f25d0" strokeWidth=".9" />
    <path d="M6 6.500h5v5H6z" fill="#f3b6ea" stroke="#c2187a" />
    <g fill="#fff" stroke="#d01843" strokeWidth="1.300">
      <circle cx="15" cy="5.500" r="1.500" />
      <circle cx="20.500" cy="8.500" r="1.500" />
      <circle cx="4" cy="17.500" r="1.500" />
    </g>
  </Svg>
);

const Snipping = () => (
  <Svg size={36}>
    <path d="M1.500 11v4.500c5 3.500 12-1 19-7l.500-4z" fill="#8f8f8f" />
    <ellipse cx="11.500" cy="7" rx="10.300" ry="5" transform="rotate(-20 11.500 7)" fill="#fff" stroke="#d12b2b" />
    <path d="M8 5l6.500 10M12.500 3l1 11" stroke="#777" strokeWidth="1.200" />
    <ellipse cx="19" cy="15" rx="3.800" ry="2.200" transform="rotate(20 19 15)" stroke="#1f7fc4" strokeWidth="1.500" />
    <ellipse cx="15" cy="19" rx="2.200" ry="3.800" stroke="#1f7fc4" strokeWidth="1.500" />
  </Svg>
);

const Gulls = () => (
  <Svg size={36}>
    <circle cx="12" cy="12" r="11.500" fill="#0f86d0" />
    <path d="M7.500 6.500c2.500-.5 4 0 5.500 1.500 2-1.500 4.500-2 8-1-3 0-5 .8-7.500 3-1.500-2.200-3-3-6-3.500z" fill="#fff" />
    <path d="M.8 14c4-.5 6.500 0 8 2.200 3-2.500 7-3.200 13-1.700-5 0-8.500 1-12 4.500-2-3-4.500-4-9-5z" fill="#fff" />
  </Svg>
);

const TaskView = () => (
  <svg width="26" height="26" viewBox="0 0 26 26" fill="none" stroke="#fff" strokeWidth="1.400">
    <path d="M1.500 1v4h16V1M1.500 25v-4h16v4M1.500 8.500h16v9h-16zM23.500 1v7M23.500 13v12" />
    <path d="M22 8.500h3v3h-3z" fill="#fff" stroke="none" />
  </svg>
);

const taskIcons = [
  [Explorer, true], [Firefox, true], [Chrome], [Gimp], [Inkscape], [Arduino], [Fritzing],
  [Paint, true], [RLogo], [Cells], [Snipping], [Gulls]
];

const sidebarIcons = [
  <>
    <ellipse cx="12" cy="22.500" rx="8" ry="1.500" fill="#cfcfcf" />
    <path d="M1.500 5l5-2.500 5-1.500L17 3.500v4L11 18l-9.500-3.500z" fill="#1f9ee8" />
    <path d="M13 5.500L17.500 3.500l5.500 2v11L15 21l-6.500-2.500V13l4.500-1.500z" fill="#6cc91a" />
    <path
      d="M1.500 10.500l6 1.500 5-1M7.500 7.500v9M1.500 5l6 2 5-2M6.500 3l5.500 1.500M8.500 13l6.500 2 8-4M15 15v6M18 8v11M13 5.500l5 2 5-2"
      stroke="#e9f6ff"
      strokeWidth=".9"
    />
  </>,
  <>
    <ellipse cx="10" cy="22.500" rx="8" ry="1.200" fill="#cfcfcf" />
    <path d="M9 8l9 7.500L5.500 21.500z" fill="#2f7fd6" />
    <ellipse cx="13.500" cy="10.500" rx="6" ry="4.500" transform="rotate(40 13.500 10.500)" fill="#15364f" />
    <path d="M2 7c0-5 8-6 9-2-2-.5-4 0-5 2z" fill="#d9661d" />
    <path d="M14 20c5 0 3-6 7-6 3 4-1 9-7 6z" fill="#7cc22e" />
    <path d="M20 1l1.200 2.500 2.800.3-2 2 .5 2.700L20 7.200l-2.500 1.300.5-2.700-2-2 2.800-.3z" fill="#f3c23a" />
    <circle cx="13.500" cy="2.500" r="2.200" fill="#c95bd8" />
    <circle cx="3" cy="11.500" r="2.200" fill="#e8569d" />
    <circle cx="22" cy="12.500" r="2.200" fill="#ea4a62" />
  </>,
  <>
    <ellipse cx="13" cy="23" rx="9" ry="1" fill="#cfcfcf" />
    <path d="M1 5l15-4 3 12-14 6z" fill="#fff" stroke="#9b9b9b" strokeWidth=".8" />
    <path d="M3 6l5-1.500L9 14z" fill="#8bd04a" />
    <path d="M10 2.500L23.500 8 19 21 4.500 14.500z" fill="#fff" stroke="#8b8b8b" strokeWidth=".8" />
    <path d="M11 4.500L21.500 9l-3.500 9.500-11-5z" fill="#7cc3f0" />
    <path d="M7 13.500l5-3 7.500 3-1.500 5z" fill="#4b9b2d" />
    <path d="M10 9l-2 3.500 4-.5z" fill="#2c62b8" />
    <path d="M13 13l4-2.500 2 3-3 2z" fill="#a84e1b" />
  </>,
  <>
    <circle cx="12" cy="12" r="10" fill="#fff" stroke="#f09a22" strokeWidth="2.600" />
    <path d="M12 4.500v15M4.500 12h15" stroke="#c9c9c9" />
    <path d="M18 6l-4 8-3.500-3.500z" fill="#dd3232" />
    <path d="M6.500 17.500L10.500 10l3.500 3.500z" fill="#2f74c8" />
    <text x="12" y="7.500" textAnchor="middle" fontFamily="Open Sans" fontSize="6.500" letterSpacing="0" fill="#222">N</text>
  </>,
  <>
    <ellipse cx="13" cy="23.300" rx="9" ry=".7" fill="#cfcfcf" />
    <path d="M7 1.500h10.500L23 7v15H7z" fill="#dff0fb" stroke="#3a93cf" strokeWidth="1.200" />
    <path d="M17.500 1.500V7H23z" fill="#fff" stroke="#3a93cf" />
    <text x="2" y="18.500" fontFamily="Liberation Serif" fontStyle="italic" fontSize="20" letterSpacing="0" fill="#2d4a7c" stroke="#2d4a7c" strokeWidth=".4">fx</text>
  </>
];

const navGlyphs = [
  'M3 2v10M12 2v10L6 7z',
  'M10 2v10L4 7z',
  'M4 2v10l6-5z',
  'M11 2v10M2 2v10l6-5z'
];

const ZoomIcon = ({ plus }) => (
  <svg width="18" height="18" viewBox="0 0 18 18" fill="none">
    <circle cx="9" cy="9" r="7.500" fill="#cfe3f2" stroke="#6d7f8d" strokeWidth="1.300" />
    <path d={plus ? 'M5 9h8M9 5v8' : 'M5 9h8'} stroke="#1d4f7c" strokeWidth="1.800" />
  </svg>
);

const ReplaceDialog = () => (
  <Dialog>
    <DialogTitle>
      <Label $track={-0.15}>Find & Replace</Label>
      <svg width="16" height="16" viewBox="0 0 16 16" stroke="#000" strokeWidth="1.200">
        <path d="M.5.500l15 15M15.500.500l-15 15" />
      </svg>
    </DialogTitle>
    <DialogMain>
      <FieldColumn>
        <Field $height={132}>
          <Mnemonic text="_Search for" />
          <Combo $width={406}>
            <Label>-</Label>
            <Chevron />
          </Combo>
        </Field>
        <Field $height={124}>
          <Mnemonic text="Re_place with" />
          <Combo $width={406}>
            <Caret />
            <Chevron />
          </Combo>
        </Field>
        <CheckRow>
          <CheckBox />
          <Mnemonic text="Ma_tch case" />
        </CheckRow>
        <CheckRow>
          <CheckBox />
          <Mnemonic text="_Entire cells" />
        </CheckRow>
      </FieldColumn>
      <ButtonColumn>
        <Button $primary $after={12}><Mnemonic text="_Find" /></Button>
        <Button $after={12}><Mnemonic text="Find _All" /></Button>
        <ButtonRule />
        <Button $after={12}><Mnemonic text="_Replace" /></Button>
        <Button><Mnemonic text="Replace A_ll" /></Button>
      </ButtonColumn>
    </DialogMain>
    <DialogFooter>
      <Button $width={167}>
        <Mnemonic text="More _Options" $track={-0.3} />
        <svg width="15" height="18" viewBox="0 0 16 18">
          <path d="M1 1h14L8 8.500zM1 9.500h14L8 17z" />
        </svg>
      </Button>
      <Button><Mnemonic text="_Help" /></Button>
      <Button><Mnemonic text="_Close" /></Button>
    </DialogFooter>
  </Dialog>
);

export default function App() {
  return (
    <Desktop>
      <GlobalStyle />
      <TitleBar>
        <Svg size={24}>{icons.calc}</Svg>
        <Label $track={-0.15} $color="#979797">dataAloha.csv - OpenOffice Calc</Label>
        <WindowControls>
          <svg width="16" height="16" stroke="#8a8a8a"><path d="M0 8.500h16" /></svg>
          <svg width="16" height="16" fill="none" stroke="#8a8a8a">
            <path d="M.5 3.500h11v12H.5zM3.500 3.500v-3h12v12h-4" />
          </svg>
          <svg width="16" height="16" stroke="#8a8a8a"><path d="M.5.500l15 15M15.500.500l-15 15" /></svg>
        </WindowControls>
      </TitleBar>
      <EdgeLine />
      <MenuBar>
        {menus.map(([text, width]) => (
          <MenuItem key={text} $width={width}>
            <Mnemonic text={text} />
          </MenuItem>
        ))}
        <CloseDocument>
          <svg width="13" height="13" viewBox="0 0 13 13" stroke="#4a5a68" strokeWidth="2.400">
            <path d="M1.500 1l10 11M11.500 1l-10 11" />
          </svg>
        </CloseDocument>
      </MenuBar>

      <ToolbarRow $height={46}>
        <Toolbar $width={1248}>
          <Grip $after={7.4} />
          <Tools items={standardTools} />
          <Overflow />
        </Toolbar>
        <Toolbar $width={269}>
          <Grip $after={9} />
          <Combo $width={149} $after={1}>
            <Label $color="#7b7b7b">Find</Label>
            <Chevron />
          </Combo>
          <Tools items={['findDown', 'findUp']} />
          <Overflow />
        </Toolbar>
      </ToolbarRow>
      <ToolbarRow $height={47}>
        <Toolbar $width={1215} $top={1}>
          <Grip $after={8} />
          <ToolButton $after={13.5}>
            <Svg>{icons.styles}</Svg>
          </ToolButton>
          <Combo $width={230} $after={13}>
            <Label>Arial</Label>
            <Chevron />
          </Combo>
          <Combo $width={92} $after={12.5}>
            <Label $track={-0.8}>10</Label>
            <Chevron />
          </Combo>
          <Tools items={formatTools} />
          <Overflow />
        </Toolbar>
      </ToolbarRow>

      <Workspace>
        <SheetArea>
          <FormulaBar>
            <Combo $width={189} $after={17}>
              <Label $track={-0.8}>B2:B292</Label>
              <Chevron />
            </Combo>
            <FormulaIcons>
              <Svg>
                <text x="3" y="19" fontFamily="Liberation Serif" fontStyle="italic" fontWeight="700" fontSize="21" letterSpacing="0" fill="#2b3a48">fx</text>
                <path d="M3 1l1 2 2 1-2 1-1 2-1-2-2-1 2-1zM12-1l1 1.500L15 1l-2 1-1 1.500L11 2 9 1l2-.5zM21 3l1 2 2 1-2 1-1 2-1-2-2-1 2-1z" fill="#f5b921" />
              </Svg>
              <Svg>
                <path d="M2 2h19v5h-3L17 5H9l6 6.500L8.500 19H17l1-2.500h3V22H2v-3l7-7.500L2 5z" fill="#4fa8de" stroke="#1c567f" strokeWidth="1.300" />
              </Svg>
              <Svg>
                <path d="M4 8h16v3H4zM4 14h16v3H4z" fill="#3e4d5a" />
              </Svg>
            </FormulaIcons>
            <FormulaInput>
              <Label>CO2</Label>
            </FormulaInput>
          </FormulaBar>
          <SheetBody>
            <Grid>
              <Row $head>
                <HeadCell $width={50} />
                {columns.map(([name, width]) => (
                  <HeadCell key={name} $width={width} $selected={name === 'B'}>
                    {name}
                  </HeadCell>
                ))}
              </Row>
              {rows.map(({ n, values }) => (
                <Row key={n}>
                  <RowHead $selected={n !== 1}>{n}</RowHead>
                  {columns.map(([name, width], i) => (
                    <Cell key={name} $width={width} $text={n === 1} $selected={name === 'B' && n !== 1}>
                      {values[i]}
                    </Cell>
                  ))}
                </Row>
              ))}
            </Grid>
            <VerticalScroll>
              <ScrollGlyph />
              <VerticalThumb />
              <ScrollGlyph turn={180} />
            </VerticalScroll>
          </SheetBody>
          <TabBar>
            {navGlyphs.map(d => (
              <NavButton key={d}>
                <svg width="14" height="14" viewBox="0 0 14 14" fill="#000" stroke="#000">
                  <path d={d} />
                </svg>
              </NavButton>
            ))}
            <SheetTab>
              <svg width="88" height="26" viewBox="0 0 88 26">
                <path d="M0 0l11 25h66L87.500 0z" fill="#fff" />
                <path d="M0 0l11 25h66L87.500 0" fill="none" stroke="#666" strokeWidth="1.300" />
              </svg>
              <Label $track={-0.5}>Sheet1</Label>
            </SheetTab>
            <TabSpace />
            <Splitter />
            <HorizontalScroll>
              <ScrollGlyph turn={-90} />
              <HorizontalThumb />
              <ScrollGlyph turn={90} />
            </HorizontalScroll>
          </TabBar>
        </SheetArea>
        <SidebarGrip />
        <Sidebar>
          <SidebarMenu>
            <svg width="16" height="16" viewBox="0 0 16 16">
              <path d="M1 2h9M1 5h9M1 8h9" stroke="#3e4a5c" strokeWidth="1.300" />
              <path d="M6 10h9l-4.500 5z" fill="#1d2944" />
            </svg>
          </SidebarMenu>
          {sidebarIcons.map((icon, i) => (
            <SidebarTab key={i} $active={i === 0}>
              <Svg size={35}>{icon}</Svg>
            </SidebarTab>
          ))}
        </Sidebar>
      </Workspace>

      <StatusBar>
        <StatusField $width={455} $pad={15} $first><Label $track={-0.4}>Sheet 1 / 1</Label></StatusField>
        <StatusField $width={421}><Label $track={-0.35}>Default</Label></StatusField>
        <StatusField $width={81} />
        <StatusField $width={51} $pad={7}><Label>STD</Label></StatusField>
        <StatusField $width={24} $pad={5}><Label>*</Label></StatusField>
        <StatusField $width={44} />
        <StatusField $width={546} $center $pad={0}><Label $track={-0.7}>Sum=10996217</Label></StatusField>
        <StatusField $width={229} $pad={7}>
          <ZoomIcon />
          <ZoomTrack><ZoomKnob /></ZoomTrack>
          <ZoomIcon plus />
        </StatusField>
        <StatusField $width={69} $pad={7}><Label $track={-0.4}>100 %</Label></StatusField>
      </StatusBar>

      <Taskbar>
        <StartButton>
          <svg width="24" height="24" viewBox="0 0 24 24" fill="#fff">
            <path d="M0 3.400l9.800-1.400v9.500H0zM11 1.800L24 0v11.500H11zM0 12.500h9.800V22L0 20.600zM11 12.500h13V24l-13-1.800z" />
          </svg>
        </StartButton>
        <SearchBox>
          <svg width="36" height="36" viewBox="0 0 36 36" fill="none">
            <circle cx="18" cy="18" r="14.500" stroke="#000" strokeWidth="4" />
            <circle cx="18" cy="18" r="16.800" stroke="#8a8a8a" strokeWidth=".8" />
          </svg>
          <Label $size={20} $track={-0.2}>Escribe aquí para buscar</Label>
          <svg width="20" height="26" viewBox="0 0 20 26" fill="none" stroke="#222" strokeWidth="1.500">
            <rect x="5.500" y="1" width="9" height="16" rx="3.500" />
            <path d="M2 12v4c0 6 16 6 16 0v-4M10 21v4M6 24.500h8" />
          </svg>
        </SearchBox>
        <TaskButton $width={75.5} $pull={4}><TaskView /></TaskButton>
        {taskIcons.map(([Icon, running], i) => (
          <TaskButton key={i} $running={running}><Icon /></TaskButton>
        ))}
        <TaskButton $width={74} $active $running>
          <Svg size={36}><CalcGlyph /></Svg>
        </TaskButton>
        <Tray>
          <svg width="18" height="12" viewBox="0 0 18 12" fill="none" stroke="#fff" strokeWidth="1.500">
            <path d="M1 10.500l8-8 8 8" />
          </svg>
          <svg width="22" height="18" viewBox="0 0 22 18" fill="none" stroke="#fff" strokeWidth="1.300">
            <path d="M1 6h3l6-5v16l-6-5H1zM14 6l6 6M20 6l-6 6" />
          </svg>
          <Clock>
            <Label $size={18} $track={-0.4}>21:31</Label>
            <Label $size={18} $track={-0.1}>02/07/2019</Label>
          </Clock>
          <svg width="26" height="26" viewBox="0 0 26 26" fill="none" stroke="#fff" strokeWidth="1.400">
            <path d="M1 2h24v18h-9l-3 4-3-4H1z" />
          </svg>
          <ShowDesktop />
        </Tray>
      </Taskbar>

      <ReplaceDialog />
    </Desktop>
  );
}
